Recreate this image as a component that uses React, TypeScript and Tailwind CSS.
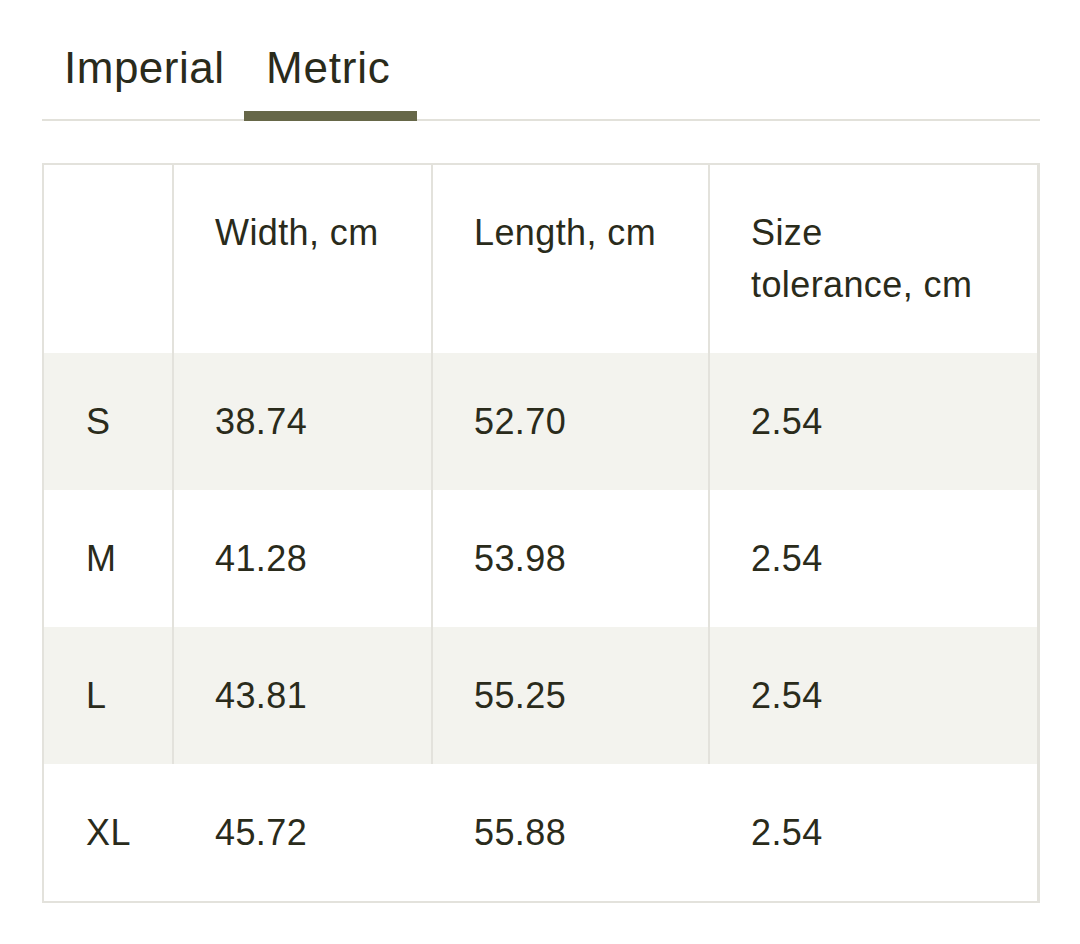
const rows = [
  { size: 'S', width: '38.74', length: '52.70', tolerance: '2.54' },
  { size: 'M', width: '41.28', length: '53.98', tolerance: '2.54' },
  { size: 'L', width: '43.81', length: '55.25', tolerance: '2.54' },
  { size: 'XL', width: '45.72', length: '55.88', tolerance: '2.54' },
]

export default function App() {
  return (
    <div
      className="min-h-screen bg-white pl-[42px] pr-[40px] pt-[42px] text-[#2a2b1b]"
      style={{ fontFamily: '"Liberation Sans", Arial, sans-serif' }}
    >
      {/* unit tabs */}
      <div className="flex items-start border-b-2 border-[#e2e1da]">
        <button className="w-[202px] pl-[22px] pb-[17px] text-left text-[44px] leading-[52px] tracking-[0.5px]">
          Imperial
        </button>
        <button className="-mb-[2px] w-[173px] border-b-[10px] border-[#666748] pl-[22px] pb-[17px] text-left text-[44px] leading-[52px] tracking-[0.8px]">
          Metric
        </button>
      </div>

      <div className="mt-[42px] border-2 border-r-[3px] border-[#e3e2dc] text-[36px] leading-[52px] tracking-[0.4px]">
        <div className="grid grid-cols-[128px_259px_277px_1fr] bg-white">
          <div className="py-[42px] pl-[44px]"></div>
          <div className="border-l-2 border-[#e3e2dc] py-[42px] pl-[41px] pr-4">Width, cm</div>
          <div className="border-l-2 border-[#e3e2dc] py-[42px] pl-[41px] pr-4">Length, cm</div>
          <div className="border-l-2 border-[#e3e2dc] py-[42px] pl-[41px] pr-[60px]">Size tolerance, cm</div>
        </div>
        {rows.map((r, i) => {
          const last = i === rows.length - 1
          const line = last ? 'border-l-2 border-transparent' : 'border-l-2 border-[#e3e2dc]'
          return (
            <div
              key={r.size}
              className={`grid grid-cols-[128px_259px_277px_1fr] ${i % 2 === 0 ? 'bg-[#f3f3ee]' : 'bg-white'}`}
            >
              <div className="pt-[43px] pb-[42px] pl-[42px]">{r.size}</div>
              <div className={`pt-[43px] pb-[42px] pl-[41px] ${line}`}>{r.width}</div>
              <div className={`pt-[43px] pb-[42px] pl-[41px] ${line}`}>{r.length}</div>
              <div className={`pt-[43px] pb-[42px] pl-[41px] ${line}`}>{r.tolerance}</div>
            </div>
          )
        })}
      </div>
    </div>
  )
}
